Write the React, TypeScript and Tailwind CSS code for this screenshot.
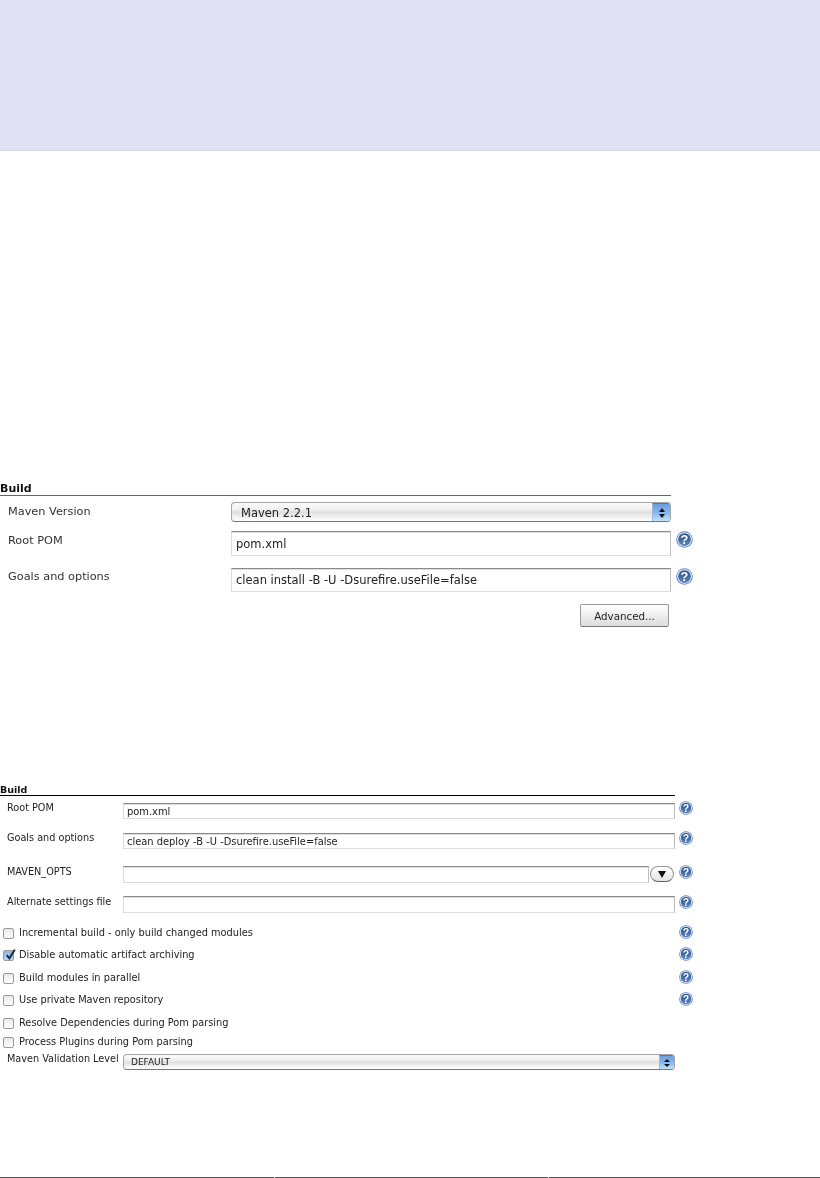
import { useId } from "react";

const sans = "font-['DejaVu_Sans',Verdana,sans-serif]";

function HelpIcon({ size }: { size: number }) {
  const id = useId();
  return (
    <svg width={size} height={size} viewBox="0 0 16 16" className="block shrink-0">
      <defs>
        <linearGradient id={id} x1="0" y1="0" x2="0" y2="1">
          <stop offset="0" stopColor="#24508f" />
          <stop offset="1" stopColor="#5f86bd" />
        </linearGradient>
      </defs>
      <circle cx="8" cy="8" r="7.8" fill="#5f85bb" />
      <circle cx="8" cy="8" r="6.9" fill="#eef2f8" />
      <circle cx="8" cy="8" r="6" fill={`url(#${id})`} />
      <text x="8" y="12.2" textAnchor="middle" fontSize="12" fontWeight="700" fill="#fff" fontFamily="Liberation Sans, sans-serif">
        ?
      </text>
    </svg>
  );
}

function TextBox({ value, className }: { value?: string; className: string }) {
  return (
    <input
      readOnly
      value={value ?? ""}
      className={`block border border-[#dcdcdc] border-t-[#8a8a8a] border-r-[#bdbdbd] bg-white text-[#222] shadow-[inset_0_1px_0_#dedede] outline-none ${sans} ${className}`}
    />
  );
}

function SelectBox({ value, className, capClass, textClass, small }: { value: string; className: string; capClass: string; textClass: string; small?: boolean }) {
  return (
    <div className={`flex items-stretch overflow-hidden rounded-[4px] border border-[#a4a4a4] border-b-[#777] bg-[linear-gradient(#fbfbfb_0%,#f1f1f1_35%,#dfdfdf_52%,#f3f3f3_80%,#fff_100%)] ${className}`}>
      <span className={`flex-1 text-[#222] ${sans} ${textClass}`}>{value}</span>
      <span className={`flex flex-col items-center justify-center gap-[2px] border-t border-l border-[#4f78c0] border-l-[#9db8e0] bg-[linear-gradient(#6d9ce0_0%,#86b6ee_50%,#c0e3fb_100%)] ${capClass}`}>
        <span className={`h-0 w-0 border-x-[3px] border-x-transparent border-b-[#111] ${small ? "border-b-[3px]" : "border-b-[4px]"}`} />
        <span className={`h-0 w-0 border-x-[3px] border-x-transparent border-t-[#111] ${small ? "border-t-[3px]" : "border-t-[4px]"}`} />
      </span>
    </div>
  );
}

function Check({ label, checked, className }: { label: string; checked?: boolean; className: string }) {
  return (
    <div className={`flex h-[14px] items-center ${className}`}>
      <span
        className={`relative ml-[3px] block h-[11px] w-[11px] shrink-0 rounded-[2px] border border-[#9a9a9a] ${
          checked ? "bg-[linear-gradient(#8fb6e6,#b9d7f5)] border-[#6f8fbd]" : "bg-[linear-gradient(#e9e9e9,#fff)]"
        }`}
      >
        {checked && (
          <svg viewBox="0 0 12 12" className="absolute -top-[3px] left-0 h-[13px] w-[13px]">
            <path d="M2.5 6.5 L5 9.5 L10 1.5" fill="none" stroke="#1d2b45" strokeWidth="1.8" />
          </svg>
        )}
      </span>
      <span className={`ml-[5px] whitespace-nowrap text-[9.8px] leading-[14px] text-[#222] ${sans}`}>{label}</span>
    </div>
  );
}

export default function App() {
  return (
    <div className="flex h-[1178px] w-[820px] flex-col overflow-hidden bg-white">
      <div className="h-[151px] border-b border-[#d8d8e6] bg-[#e2e2f7]" />

      {/* freestyle job */}
      <section className="mt-[330px] h-[147px] blur-[0.3px]">
        <h3 className={`h-[15px] w-[671px] border-b-[1.5px] border-[#666] text-[11px] leading-[15px] font-bold text-[#111] ${sans}`}>Build</h3>
        <div className="mt-[6px] flex">
          <span className={`w-[231px] pt-[2px] pl-[8px] text-[11.3px] leading-[16px] text-[#333] ${sans}`}>Maven Version</span>
          <SelectBox value="Maven 2.2.1" className="h-[20px] w-[440px]" capClass="w-[18px]" textClass="pl-[9px] text-[11.5px] leading-[21px]" />
        </div>
        <div className="mt-[9px] flex">
          <span className={`w-[231px] pt-[2px] pl-[8px] text-[11.3px] leading-[16px] text-[#333] ${sans}`}>Root POM</span>
          <TextBox value="pom.xml" className="h-[25px] w-[440px] pl-[4px] text-[11.5px]" />
          <span className="ml-[5px]"><HelpIcon size={17} /></span>
        </div>
        <div className="mt-[12px] flex">
          <span className={`w-[231px] pt-[1px] pl-[8px] text-[11.3px] leading-[16px] text-[#333] ${sans}`}>Goals and options</span>
          <TextBox value="clean install -B -U -Dsurefire.useFile=false" className="h-[24px] w-[440px] pl-[4px] text-[11.5px]" />
          <span className="ml-[5px]"><HelpIcon size={17} /></span>
        </div>
        <div className="mt-[12px] flex w-[669px] justify-end">
          <button className={`h-[23px] w-[89px] rounded-[2px] border border-[#9a9a9a] border-b-[#777] bg-[linear-gradient(#fff,#ececec_55%,#dcdcdc)] pt-[3px] text-[10.3px] text-[#222] ${sans}`}>Advanced...</button>
        </div>
      </section>

      {/* maven job */}
      <section className="mt-[153px] blur-[0.3px]">
        <h3 className={`h-[15px] w-[675px] border-b-[1.5px] border-[#000] text-[9.5px] leading-[17px] font-bold text-[#111] ${sans}`}>Build</h3>
        <div className="mt-[7px] flex h-[16px]">
          <span className={`w-[123px] pl-[7px] text-[9.7px] leading-[10px] text-[#222] ${sans}`}>Root POM</span>
          <TextBox value="pom.xml" className="h-[16px] w-[552px] pl-[3px] text-[9.9px]" />
          <span className="-mt-[2px] ml-[4px]"><HelpIcon size={14} /></span>
        </div>
        <div className="mt-[14px] flex h-[16px]">
          <span className={`w-[123px] pl-[7px] text-[9.7px] leading-[10px] text-[#222] ${sans}`}>Goals and options</span>
          <TextBox value="clean deploy -B -U -Dsurefire.useFile=false" className="h-[16px] w-[552px] pl-[3px] text-[9.9px]" />
          <span className="-mt-[2px] ml-[4px]"><HelpIcon size={14} /></span>
        </div>
        <div className="mt-[17px] flex h-[17px]">
          <span className={`w-[123px] pl-[7px] text-[9.7px] leading-[12px] text-[#222] ${sans}`}>MAVEN_OPTS</span>
          <TextBox className="h-[17px] w-[526px]" />
          <span className="ml-[1px] flex h-[16px] w-[24px] items-center justify-center rounded-[8px] border border-[#999] border-b-[#666] bg-[linear-gradient(#fff,#e4e4e4)]">
            <span className="h-0 w-0 border-x-[4px] border-t-[7px] border-x-transparent border-t-[#111]" />
          </span>
          <span className="-mt-[1px] ml-[5px]"><HelpIcon size={14} /></span>
        </div>
        <div className="mt-[13px] flex h-[17px]">
          <span className={`w-[123px] pl-[7px] text-[9.7px] leading-[12px] text-[#222] ${sans}`}>Alternate settings file</span>
          <TextBox className="h-[17px] w-[552px]" />
          <span className="-mt-[1px] ml-[4px]"><HelpIcon size={14} /></span>
        </div>

        <div className="relative mt-[13px]">
          <Check label="Incremental build - only build changed modules" className="" />
          <Check label="Disable automatic artifact archiving" checked className="mt-[8px]" />
          <Check label="Build modules in parallel" className="mt-[9px]" />
          <Check label="Use private Maven repository" className="mt-[8px]" />
          <Check label="Resolve Dependencies during Pom parsing" className="mt-[9px]" />
          <Check label="Process Plugins during Pom parsing" className="mt-[5px]" />
          <div className="absolute -top-[1px] left-[679px] flex flex-col gap-[8.3px]">
            <HelpIcon size={14} />
            <HelpIcon size={14} />
            <HelpIcon size={14} />
            <HelpIcon size={14} />
          </div>
        </div>

        <div className="mt-[5px] flex">
          <span className={`w-[123px] pl-[7px] whitespace-nowrap text-[9.7px] leading-[10px] text-[#222] ${sans}`}>Maven Validation Level</span>
          <SelectBox value="DEFAULT" className="h-[16px] w-[552px]" capClass="w-[15px]" textClass="pl-[7px] text-[9px] leading-[15px]" small />
        </div>
      </section>

      {/* table edge at the bottom of the page */}
      <div className="mt-auto grid h-[1px] grid-cols-[274px_273px_1fr] gap-[1px]">
        <div className="bg-[#555]" />
        <div className="bg-[#555]" />
        <div className="bg-[#555]" />
      </div>
    </div>
  );
}
